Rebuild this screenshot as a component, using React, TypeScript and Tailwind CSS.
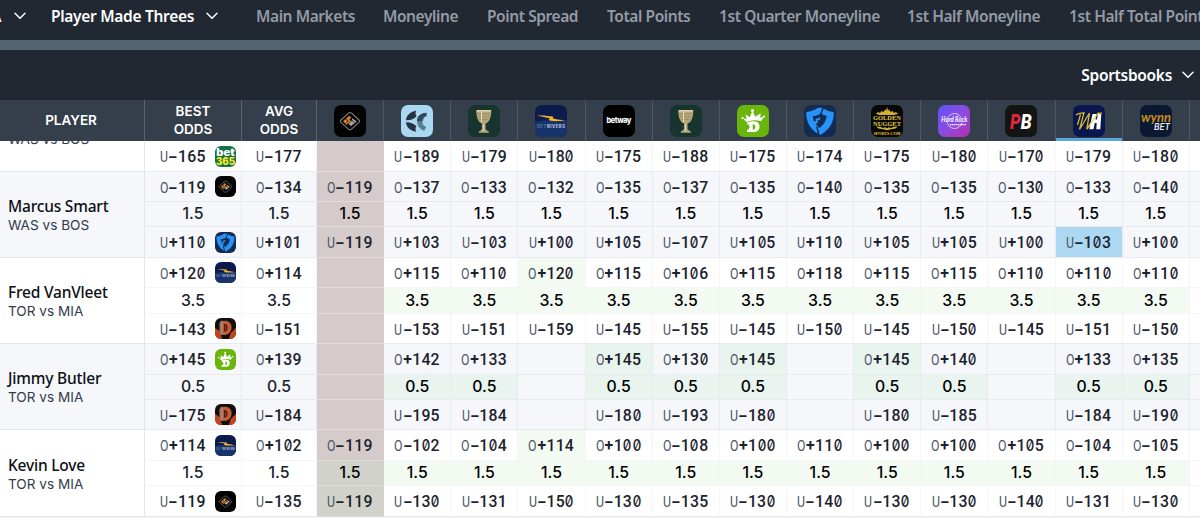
import type { ReactNode } from "react";
import clsx from "clsx";

const ui = "font-['Noto_Sans',sans-serif]";

const markets = [
  { label: "Main Markets", width: "w-[127px]" },
  { label: "Moneyline", width: "w-[104px]" },
  { label: "Point Spread", width: "w-[120px]" },
  { label: "Total Points", width: "w-[112px]" },
  { label: "1st Quarter Moneyline", width: "w-[188px]" },
  { label: "1st Half Moneyline", width: "w-[162px]" },
  { label: "1st Half Total Points", width: "w-[170px]" },
];

const books = [
  "fourcx",
  "pinnacle",
  "caesars",
  "betrivers",
  "betway",
  "caesars",
  "draftkings",
  "fanduel",
  "goldennugget",
  "hardrock",
  "pointsbet",
  "williamhill",
  "wynnbet",
];

type Player = {
  name: string;
  game: string;
  rows: string;
  shaded: boolean;
  green: boolean;
  line: string;
  best: [string, string, string, string];
  avg: [string, string];
  over: string[];
  under: string[];
  pick?: number;
};

const players: Player[] = [
  {
    name: "",
    game: "WAS vs BOS",
    rows: "-mt-[55px] grid-rows-[30px_25px_31px]",
    shaded: false,
    green: false,
    line: "",
    best: ["", "", "-165", "bet365"],
    avg: ["", "-177"],
    over: ["", "", "", "", "", "", "", "", "", "", "", "", ""],
    under: ["", "-189", "-179", "-180", "-175", "-188", "-175", "-174", "-175", "-180", "-170", "-179", "-180"],
  },
  {
    name: "Marcus Smart",
    game: "WAS vs BOS",
    rows: "grid-rows-[30px_25px_31px]",
    shaded: true,
    green: false,
    line: "1.5",
    best: ["-119", "fourcx", "+110", "fanduel"],
    avg: ["-134", "+101"],
    over: ["-119", "-137", "-133", "-132", "-135", "-137", "-135", "-140", "-135", "-135", "-130", "-133", "-140"],
    under: ["-119", "+103", "-103", "+100", "+105", "-107", "+105", "+110", "+105", "+105", "+100", "-103", "+100"],
    pick: 11,
  },
  {
    name: "Fred VanVleet",
    game: "TOR vs MIA",
    rows: "grid-rows-[30px_26px_30px]",
    shaded: false,
    green: true,
    line: "3.5",
    best: ["+120", "betrivers", "-143", "dimers"],
    avg: ["+114", "-151"],
    over: ["", "+115", "+110", "+120", "+115", "+106", "+115", "+118", "+115", "+115", "+110", "+110", "+110"],
    under: ["", "-153", "-151", "-159", "-145", "-155", "-145", "-150", "-145", "-150", "-145", "-151", "-150"],
  },
  {
    name: "Jimmy Butler",
    game: "TOR vs MIA",
    rows: "grid-rows-[31px_25px_30px]",
    shaded: true,
    green: true,
    line: "0.5",
    best: ["+145", "draftkings", "-175", "dimers"],
    avg: ["+139", "-184"],
    over: ["", "+142", "+133", "", "+145", "+130", "+145", "", "+145", "+140", "", "+133", "+135"],
    under: ["", "-195", "-184", "", "-180", "-193", "-180", "", "-180", "-185", "", "-184", "-190"],
  },
  {
    name: "Kevin Love",
    game: "TOR vs MIA",
    rows: "grid-rows-[31px_25px_31px]",
    shaded: false,
    green: true,
    line: "1.5",
    best: ["+114", "betrivers", "-119", "fourcx"],
    avg: ["+102", "-135"],
    over: ["-119", "-102", "-104", "+114", "+100", "-108", "+100", "+110", "+100", "+100", "+105", "-104", "-105"],
    under: ["-119", "-130", "-131", "-150", "-130", "-135", "-130", "-140", "-130", "-130", "-140", "-131", "-130"],
  },
];

const logos: Record<string, ReactNode> = {
  fourcx: (
    <>
      <rect width="32" height="32" fill="#030303" />
      <path d="M14.500 8.200 7 15q-1.200 1.200 0 2.400l7.500 6.800q1.500 1.300 3 0l7.500-6.800q1.200-1.200 0-2.400l-7.500-6.800q-1.500-1.300-3 0z" fill="none" stroke="#85817c" strokeWidth="1.100" />
      <path d="m15.200 10.800 2.200 1.800-2 2 1.600 1.600-4.200 3.600-3.800-3.600z" fill="#dc8424" />
      <path d="m18.200 13.200 4.600 3.200-5.800 4.700-2.500-2 3-2.800z" fill="#aaa6a0" />
      <path d="m12 14.200 2.300 2-2 1.800M18 15.500l2.300 2" fill="none" stroke="#1a1511" strokeWidth="1" />
    </>
  ),
  pinnacle: (
    <>
      <rect width="32" height="32" fill="#a9d8f0" />
      <path d="M15.200 5.500C9 7 5.200 10.800 5 15.200c4.200.3 8-1 10.500-3.600-1.300-2-1.100-4.200-.3-6.100zM5 17.200c.3 4.800 4.200 8.600 10.200 9.500-1-1.900-1-3.800.2-5.500C12.800 18.500 9.200 17.100 5 17.200z" fill="#263342" />
      <path d="M25.500 7.800c-5.500 0-9.500 3.600-9.500 8.200 0 4.700 3.300 8.800 7.300 9.800l2-3.800c-2.600-1-3.900-3-3.900-5z" fill="#5d7e92" />
      <path d="M25.500 7.800c-5.500 0-9.500 3.600-9.500 8.200l4.800.3c.2-2.700 2-4.500 4.900-5.200z" fill="#30485a" />
    </>
  ),
  caesars: (
    <>
      <rect width="32" height="32" fill="#18342f" />
      <path d="M8.300 5h15c0 6.500-1.300 12-5.600 13.400l-.4 2.600.9.800-.9.800c.2 2.300 1.500 3.300 3.500 3.800v1.400H10.800v-1.400c2-.5 3.300-1.500 3.500-3.800l-.9-.8.9-.8-.4-2.600C9.600 17 8.300 11.500 8.300 5z" fill="#b5a678" />
      <path d="M8.800 5.800h14" stroke="#e9dfb9" strokeWidth="1.200" />
      <path d="M9.700 9h12.200M10.200 11.800h11.200M11.500 14.600h8.600" stroke="#8a7e55" strokeWidth="1" strokeDasharray="1.500 1" />
      <path d="M13.500 7v10M15.400 19v7" stroke="#ece4c3" strokeWidth=".9" />
    </>
  ),
  betrivers: (
    <>
      <rect width="32" height="32" fill="#0b1b4b" />
      <path d="M0 17q8-3 16-1t16-1v17H0z" fill="#17356c" />
      <path d="M2 10.800c5-.8 11 .4 16.200.8-1.200 1.400-.2 1.900 2 2.300 3.400.8 7 .9 10.300 1.600-5 .2-9.600 1.200-14.800.3-2.600-.5-2.300-1.500-.6-2.700-4.100-.2-8.300-1.800-13.100-2.300z" fill="#f3b829" />
      <text x="16" y="23" textAnchor="middle" textLength="28" fontSize="4.300" fontWeight="700" fill="#c4cde0" fontFamily="Inter, sans-serif"><tspan fill="#5c719b">BET</tspan>RIVERS</text>
    </>
  ),
  betway: (
    <>
      <rect width="32" height="32" fill="#000" />
      <text x="16" y="18" textAnchor="middle" textLength="25" fontSize="7.500" fontWeight="800" fill="#fff" fontFamily="Inter, sans-serif">betway</text>
    </>
  ),
  draftkings: (
    <>
      <rect width="32" height="32" fill="#69b50a" />
      <path d="m5.500 13 4 1.200-1-5 4.200 3L15.500 5.500l2.700 6.300 5.500-3.600-.5 4.600 4-1.300-3.200 4.800q-7.200-2.500-14.500.7z" fill="#fff" />
      <circle cx="15.500" cy="5.500" r="1.500" fill="#fff" />
      <circle cx="5.500" cy="13" r="1.100" fill="#fff" />
      <circle cx="27" cy="11.500" r="1.100" fill="#fff" />
      <path d="M10.500 17.200q6-1.800 9.500-.4c4 2.500 3.500 9.800-2.500 10.200H10v-2.500h2v-5h-2z" fill="#fff" />
      <path d="M15.700 19.200c3.600-.2 3.500 5.600 0 5.500z" fill="#69b50a" />
      <path d="M9.500 22h3.500" stroke="#69b50a" strokeWidth="1" />
    </>
  ),
  fanduel: (
    <>
      <rect width="32" height="32" fill="#142b51" />
      <path d="M2.300 7C7 6.500 10.500 5.300 14 2.800h4.500c3.600 2.500 7 3.800 11.200 4.200.5 9.500-3.600 17.700-13.700 23C6 24.700 1.800 16.500 2.300 7z" fill="#2793f8" />
      <path d="M8.600 11.200c3.200-.3 6-1 8.400-2.700 1.700 1.100 3.500 1.900 5.700 2.300-.5 5-2.800 8.800-7.200 12.200-1.600-1.300-2.800-2.600-3.800-4.200l2-.8v-2.400l-3.400 1c-.8-1.700-1.300-3.300-1.700-5.400z" fill="#142b51" />
      <path d="M11.500 13.800c2-.3 3.300-.7 4.700-1.500l-.2 2.300-4 1.600z" fill="#2793f8" />
      <path d="m19.800 1.500-3.300 8.300M12.800 21.500l2 8.500" stroke="#142b51" strokeWidth="1.500" />
    </>
  ),
  goldennugget: (
    <>
      <rect width="32" height="32" fill="#070706" />
      <path d="m5 9 2-2 2 1 1.500-2 2 1L14 4.500l1.200 1L16 1.800l1 3.700 1-1 1.700 2.500 2-1L23 8l2-1 2 2-4 1H9z" fill="#cfb233" />
      <path d="m5 21.500 4 .2 3 1.300 2-.8 2 1 2-1 2 .8 3-1.300 4-.2-2.500 2-4.500.8-4 1-4-1-4.500-.8z" fill="#cfb233" />
      <g fill="#e5cb42" fontFamily="Liberation Serif, serif" fontWeight="700" textAnchor="middle">
        <text x="16" y="14.600" fontSize="6.800" textLength="28" lengthAdjust="spacingAndGlyphs">GOLDEN</text>
        <text x="16" y="20.500" fontSize="6.800" textLength="28" lengthAdjust="spacingAndGlyphs">NUGGET</text>
        <text x="16" y="29.800" fontSize="4.600" textLength="27" lengthAdjust="spacingAndGlyphs">SPORTS.COM</text>
      </g>
    </>
  ),
  hardrock: (
    <>
      <defs>
        <linearGradient id="hardrock" x1="0" y1="0" x2="1" y2="1">
          <stop offset="0" stopColor="#5e53fb" />
          <stop offset=".5" stopColor="#8b4be0" />
          <stop offset="1" stopColor="#b52fae" />
        </linearGradient>
      </defs>
      <rect width="32" height="32" fill="url(#hardrock)" />
      <circle cx="16.500" cy="16" r="7.500" fill="none" stroke="#e0c8f8" strokeWidth="1" />
      <path d="M3 12.500h27v5H3z" fill="#8050ea" />
      <text x="16.300" y="17.300" textAnchor="middle" textLength="26" lengthAdjust="spacingAndGlyphs" fontSize="7" fontWeight="700" fontStyle="italic" fill="#fff" fontFamily="Lato, sans-serif">Hard Rock</text>
      <path d="M12 19.600h16" stroke="#fff" strokeWidth="1.300" strokeDasharray="1.400 .5" />
    </>
  ),
  pointsbet: (
    <>
      <rect width="32" height="32" fill="#131414" />
      <g fontSize="21" fontWeight="900" fontStyle="italic" fontFamily="Roboto, sans-serif">
        <text x="5" y="24" fill="#e2273d" textLength="10.500" lengthAdjust="spacingAndGlyphs">P</text>
        <text x="15.800" y="24" fill="#fff" textLength="11" lengthAdjust="spacingAndGlyphs">B</text>
      </g>
    </>
  ),
  williamhill: (
    <>
      <rect width="32" height="32" fill="#09164f" />
      <path d="M3 10c2-1.800 5-2 8-2.200L6.500 24.500 16.500 8l-2.700 16L25 8.200h4M7.500 9.500 4.500 20" fill="none" stroke="#d9bd25" strokeWidth="1.300" />
      <path d="M19.500 9h4l-1 5.500h1.300L25 9h3.300l-1 15.300h-4l.4-6.300h-2l-1.200 6.300h-4.200z" fill="#fff" />
      <path d="M14 24 25 8.200" stroke="#d9bd25" strokeWidth=".9" />
    </>
  ),
  wynnbet: (
    <>
      <rect width="32" height="32" fill="#0b1832" />
      <text x="16" y="17" textAnchor="middle" textLength="30" lengthAdjust="spacingAndGlyphs" fontSize="13" fontWeight="700" fontStyle="italic" fill="#c78d1c" fontFamily="Lato, sans-serif">wynn</text>
      <text x="22" y="24.600" textAnchor="middle" textLength="16" lengthAdjust="spacingAndGlyphs" fontSize="8.500" fontWeight="600" fontStyle="italic" fill="#e9ebef" fontFamily="Inter, sans-serif">BET</text>
    </>
  ),
  bet365: (
    <>
      <rect width="32" height="32" fill="#14714f" />
      <text x="16" y="14.500" textAnchor="middle" textLength="28" lengthAdjust="spacingAndGlyphs" fontSize="15" fontWeight="900" fill="#fff" fontFamily="Inter, sans-serif">bet</text>
      <text x="16" y="28.500" textAnchor="middle" textLength="29" lengthAdjust="spacingAndGlyphs" fontSize="15" fontWeight="900" fill="#f8e71c" fontFamily="Inter, sans-serif">365</text>
    </>
  ),
  dimers: (
    <>
      <rect width="32" height="32" fill="#170c0a" />
      <path d="M0 15 7 20l4 12H0zM32 15l-8 8-3 9h11z" fill="#c5441b" />
      <path d="M9 5h6c7 0 9.500 4 9.500 9.500S21 25 15 25H9l-1.500-3V8z" fill="#d4552b" stroke="#8e8279" strokeWidth="1.300" />
      <path d="M9 5.500v19l3-.5V6z" fill="#93897f" />
      <path d="M14.500 10c5 0 5 9.500 0 9.500z" fill="#a33a17" stroke="#42201a" strokeWidth="1.800" />
    </>
  ),
};

function Logo({ name, className }: { name: string; className: string }) {
  return (
    <svg viewBox="0 0 32 32" className={clsx("shrink-0 overflow-hidden", className)}>
      {logos[name]}
    </svg>
  );
}

function Chevron() {
  return (
    <svg viewBox="0 0 12 8" className="mb-0.5 h-2 w-3 shrink-0" fill="none" stroke="#fff" strokeWidth="1.5" strokeLinecap="round" strokeLinejoin="round">
      <path d="m1 1.200 5 5 5-5" />
    </svg>
  );
}

// Fixed-width glyph slots keep the odds aligned like a monospace face
function Odds({ side, value }: { side: "O" | "U"; value: string }) {
  if (!value) return null;
  return (
    <span className="-ml-px flex items-baseline pt-[2px] font-['Roboto',sans-serif] text-[15.800px] leading-5 font-medium text-[#1b222c]">
      <span className="flex w-[9.200px] justify-center">
        <span className="inline-block scale-x-[0.82] text-[15px] font-normal text-[#4a5568]">{side}</span>
      </span>
      <span className="flex w-[9.200px] justify-center">
        <span className={clsx("inline-block font-semibold", value[0] === "-" && "scale-x-[1.7]")}>{value[0]}</span>
      </span>
      {value
        .slice(1)
        .split("")
        .map((digit, i) => (
          <span key={i} className="flex w-[9.200px] justify-center">
            <span className={clsx("inline-block", digit === "0" && "scale-x-[0.86] font-['Inter',sans-serif] text-[15.400px] slashed-zero")}>
              {digit}
            </span>
          </span>
        ))}
    </span>
  );
}

function Line({ value, strong }: { value: string; strong?: boolean }) {
  return (
    <span className={clsx("font-['Inter',sans-serif] text-[15.800px] leading-5 font-medium", strong ? "text-black" : "text-[#1b222c]")}>
      {value}
    </span>
  );
}

function Cell({ bg, border, children }: { bg?: string; border: string; children?: ReactNode }) {
  return <div className={clsx("flex items-center justify-center border-r border-b", border, bg)}>{children}</div>;
}

function PlayerGroup({ player }: { player: Player }) {
  const { shaded, green, best, avg, line, over, under } = player;
  const inner = shaded ? "border-[#e7eaef]" : "border-[#f3f5f8]";
  const last = shaded ? "border-[#e7eaef]" : "border-r-[#f3f5f8] border-b-[#e7eaef]";
  const pinned = "border-r-[#d6cbcb] border-b-[#e3dcdd]";
  const tint = shaded ? "bg-[#e9f4ee]" : "bg-[#f3faf2]";

  const cellBg = (col: number, row: "over" | "line" | "under") => {
    if (col === 0) return green && over[0] && row !== "over" ? "bg-[#d1d2c9]" : "bg-[#d6cbcb]";
    if (player.pick === col && row === "under") return "bg-[#acd8f1]";
    if (!green || !over[col]) return undefined;
    if (row === "line") return tint;
    if (row === "over" && over[col] === best[0]) return tint;
    return undefined;
  };

  return (
    <div
      className={clsx(
        "grid w-full grid-cols-[145px_97px_75px_repeat(13,67.150px)_67px]",
        player.rows,
        shaded ? "bg-[#f5f7fb]" : "bg-white",
      )}
    >
      <div className="row-span-3 flex flex-col justify-center border-r border-b border-[#e3e6eb] pt-[3px] pl-2">
        <span className={clsx(ui, "h-[19px] text-[15.500px] leading-[19px] font-medium tracking-[-0.2px] whitespace-nowrap text-[#0c0f14]")}>
          {player.name}
        </span>
        <span className="font-['Inter',sans-serif] text-[13.600px] leading-[19px] text-[#333b49]">{player.game}</span>
      </div>

      <Cell border={inner}>
        <div className="flex items-center gap-2.5 pl-[11px]">
          <Odds side="O" value={best[0]} />
          {best[1] && <Logo name={best[1]} className="size-[21px] rounded-[6px]" />}
        </div>
      </Cell>
      <Cell border={inner}>
        <Odds side="O" value={avg[0]} />
      </Cell>
      {books.map((_, col) => (
        <Cell key={col} border={col === 0 ? pinned : inner} bg={cellBg(col, "over")}>
          <Odds side="O" value={over[col]} />
        </Cell>
      ))}
      <Cell border={inner} />

      <Cell border={inner}>
        <Line value={line} />
      </Cell>
      <Cell border={inner}>
        <Line value={line} />
      </Cell>
      {books.map((_, col) => (
        <Cell key={col} border={col === 0 ? pinned : inner} bg={cellBg(col, "line")}>
          {over[col] && <Line value={line} strong />}
        </Cell>
      ))}
      <Cell border={inner} />

      <Cell border={last}>
        <div className="flex items-center gap-2.5 pl-[11px]">
          <Odds side="U" value={best[2]} />
          <Logo name={best[3]} className="size-[21px] rounded-[6px]" />
        </div>
      </Cell>
      <Cell border={last}>
        <Odds side="U" value={avg[1]} />
      </Cell>
      {books.map((_, col) => (
        <Cell key={col} border={col === 0 ? pinned : last} bg={cellBg(col, "under")}>
          <Odds side="U" value={under[col]} />
        </Cell>
      ))}
      <Cell border={last} />
    </div>
  );
}

export default function App() {
  return (
    <div className="flex h-[518px] w-[1200px] flex-col overflow-hidden bg-[#212832]">
      {/* Market nav */}
      <nav className={clsx(ui, "flex h-10 shrink-0 items-center overflow-hidden pb-[7px] text-[15.500px] font-semibold tracking-[-0.42px] whitespace-nowrap text-[#939ba6]")}>
        <div className="flex w-[51px] shrink-0 items-center justify-between pr-[25px] text-white">
          <span className="-ml-[9px]">A</span>
          <Chevron />
        </div>
        <div className="flex w-[205px] shrink-0 items-center gap-3 text-white">
          <span className="tracking-[-0.3px]">Player Made Threes</span>
          <Chevron />
        </div>
        {markets.map((market) => (
          <span key={market.label} className={clsx("shrink-0", market.width)}>
            {market.label}
          </span>
        ))}
      </nav>
      <div className="h-2.5 shrink-0 bg-[#546370]" />

      {/* Sportsbook filter */}
      <div className={clsx(ui, "flex h-[50px] shrink-0 items-center justify-end gap-2.5 pt-px pr-[6px] text-[15.500px] font-semibold tracking-[-0.3px] text-white")}>
        <span>Sportsbooks</span>
        <Chevron />
      </div>

      {/* Column headings */}
      <div className="grid h-[41px] shrink-0 grid-cols-[145px_97px_75px_repeat(13,67.150px)_67px] bg-[#343f4b] text-center font-['Inter',sans-serif] text-[13.500px] leading-[18px] font-semibold text-white">
        <div className="flex items-center justify-center border-r border-[#566372] pr-0.5 pb-0.5">PLAYER</div>
        <div className="flex items-center justify-center border-r border-[#566372] pb-0.5">
          BEST
          <br />
          ODDS
        </div>
        <div className="flex items-center justify-center border-r border-[#566372] pb-0.5">
          AVG
          <br />
          ODDS
        </div>
        {books.map((book, i) => (
          <div
            key={i}
            className={clsx("flex items-center justify-center border-r border-[#4b5866]", book === "williamhill" && "shadow-[inset_0_-3px_0_#5aa7de]")}
          >
            <Logo name={book} className="size-8 rounded-[7px]" />
          </div>
        ))}
      </div>

      {/* Odds */}
      <div className="flex-1 overflow-hidden bg-[#f1f3f7]">
        {players.map((player, i) => (
          <PlayerGroup key={i} player={player} />
        ))}
      </div>
    </div>
  );
}
